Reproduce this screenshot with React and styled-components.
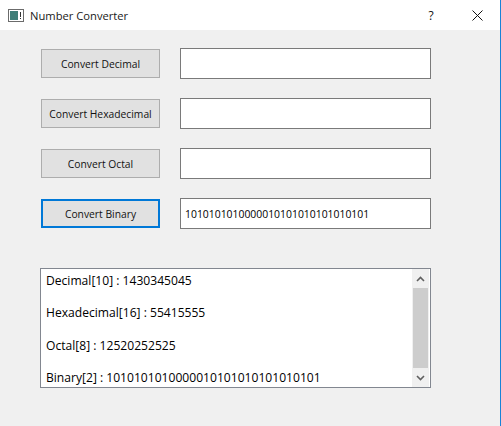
import styled, { createGlobalStyle } from "styled-components";

const GlobalStyle = createGlobalStyle`
  html, body {
    margin: 0;
    padding: 0;
    background: #f0f0f0;
  }
  body {
    font-family: "Open Sans", "Noto Sans", sans-serif;
  }
`;

const Window = styled.div`
  width: 500px;
  height: 426px;
  background: #f0f0f0;
  border-right: 1px solid #1883d7;
  display: flex;
  flex-direction: column;
  overflow: hidden;
`;

const TitleBar = styled.div`
  height: 30px;
  background: #ffffff;
  display: flex;
  align-items: center;
  padding-left: 8px;
  flex-shrink: 0;
`;

const Title = styled.span`
  margin-left: 6px;
  font-size: 11.2px;
  color: #1a1a1a;
  flex: 1;
`;

const TitleButton = styled.span`
  width: 46px;
  display: flex;
  justify-content: center;
  align-items: center;
  font-size: 12px;
  color: #111;
`;

const Content = styled.div`
  padding: 18px 0 0 40px;
  display: flex;
  flex-direction: column;
`;

const Rows = styled.div`
  display: flex;
  flex-direction: column;
  gap: 19px;
`;

const Row = styled.div`
  display: flex;
  align-items: center;
  gap: 20px;
`;

const Button = styled.button`
  margin-left: 1px;
  width: 119px;
  height: 29px;
  box-sizing: border-box;
  background: #e1e1e1;
  border: ${(p) => (p.$focused ? "2px solid #0078d7" : "1px solid #adadad")};
  font-family: "Open Sans", "Noto Sans", sans-serif;
  font-size: 10.3px;
  color: #111;
  padding: 0;
`;

const Input = styled.div`
  width: 251px;
  height: 31px;
  box-sizing: border-box;
  background: #fff;
  border: 1px solid #7a7a7a;
  display: flex;
  align-items: center;
  padding-left: 4px;
  font-size: 10.4px;
  color: #000;
`;

const Output = styled.div`
  margin-top: 39px;
  width: 391px;
  height: 120px;
  box-sizing: border-box;
  background: #fff;
  border: 1px solid #828790;
  display: flex;
`;

const OutputText = styled.div`
  flex: 1;
  padding: 4px 0 0 5px;
  font-size: 12.1px;
  line-height: 16.2px;
  color: #000;
`;

const Line = styled.div`
  margin-bottom: 16.2px;
  white-space: nowrap;
`;

const ScrollBar = styled.div`
  width: 17px;
  background: #f0f0f0;
  display: flex;
  flex-direction: column;
  margin-right: 1px;
`;

const Arrow = styled.div`
  height: 19px;
  display: flex;
  align-items: center;
  justify-content: center;
`;

const Thumb = styled.div`
  flex: 1;
  background: #cdcdcd;
  margin: 0 1px;
`;

const AppIcon = () => (
  <svg width="16" height="13" viewBox="0 0 16 13">
    <rect x="0.5" y="0.5" width="15" height="12" fill="#fff" stroke="#6b6b6b" />
    <rect x="2" y="2" width="8" height="9" fill="#3e7e78" />
    <rect x="12" y="3" width="1" height="5" fill="#333" />
    <rect x="12" y="9" width="1" height="1" fill="#333" />
  </svg>
);

const CloseIcon = () => (
  <svg width="11" height="11" viewBox="0 0 11 11">
    <path d="M0.5 0.5 L10.5 10.5 M10.5 0.5 L0.5 10.5" stroke="#111" strokeWidth="1" />
  </svg>
);

const Chevron = ({ up }) => (
  <svg width="9" height="6" viewBox="0 0 9 6">
    <path
      d={up ? "M1 5 L4.5 1.5 L8 5" : "M1 1 L4.5 4.5 L8 1"}
      fill="none"
      stroke="#606060"
      strokeWidth="1.6"
    />
  </svg>
);

const rows = [
  { label: "Convert Decimal", value: "" },
  { label: "Convert Hexadecimal", value: "" },
  { label: "Convert Octal", value: "" },
  { label: "Convert Binary", value: "1010101010000010101010101010101", focused: true },
];

const results = [
  "Decimal[10] : 1430345045",
  "Hexadecimal[16] : 55415555",
  "Octal[8] : 12520252525",
  "Binary[2] : 1010101010000010101010101010101",
];

export default function App() {
  return (
    <>
      <GlobalStyle />
      <Window>
        <TitleBar>
          <AppIcon />
          <Title>Number Converter</Title>
          <TitleButton>?</TitleButton>
          <TitleButton>
            <CloseIcon />
          </TitleButton>
        </TitleBar>
        <Content>
          <Rows>
            {rows.map((r) => (
              <Row key={r.label}>
                <Button $focused={r.focused}>{r.label}</Button>
                <Input>{r.value}</Input>
              </Row>
            ))}
          </Rows>
          <Output>
            <OutputText>
              {results.map((t) => (
                <Line key={t}>{t}</Line>
              ))}
            </OutputText>
            <ScrollBar>
              <Arrow>
                <Chevron up />
              </Arrow>
              <Thumb />
              <Arrow>
                <Chevron />
              </Arrow>
            </ScrollBar>
          </Output>
        </Content>
      </Window>
    </>
  );
}
